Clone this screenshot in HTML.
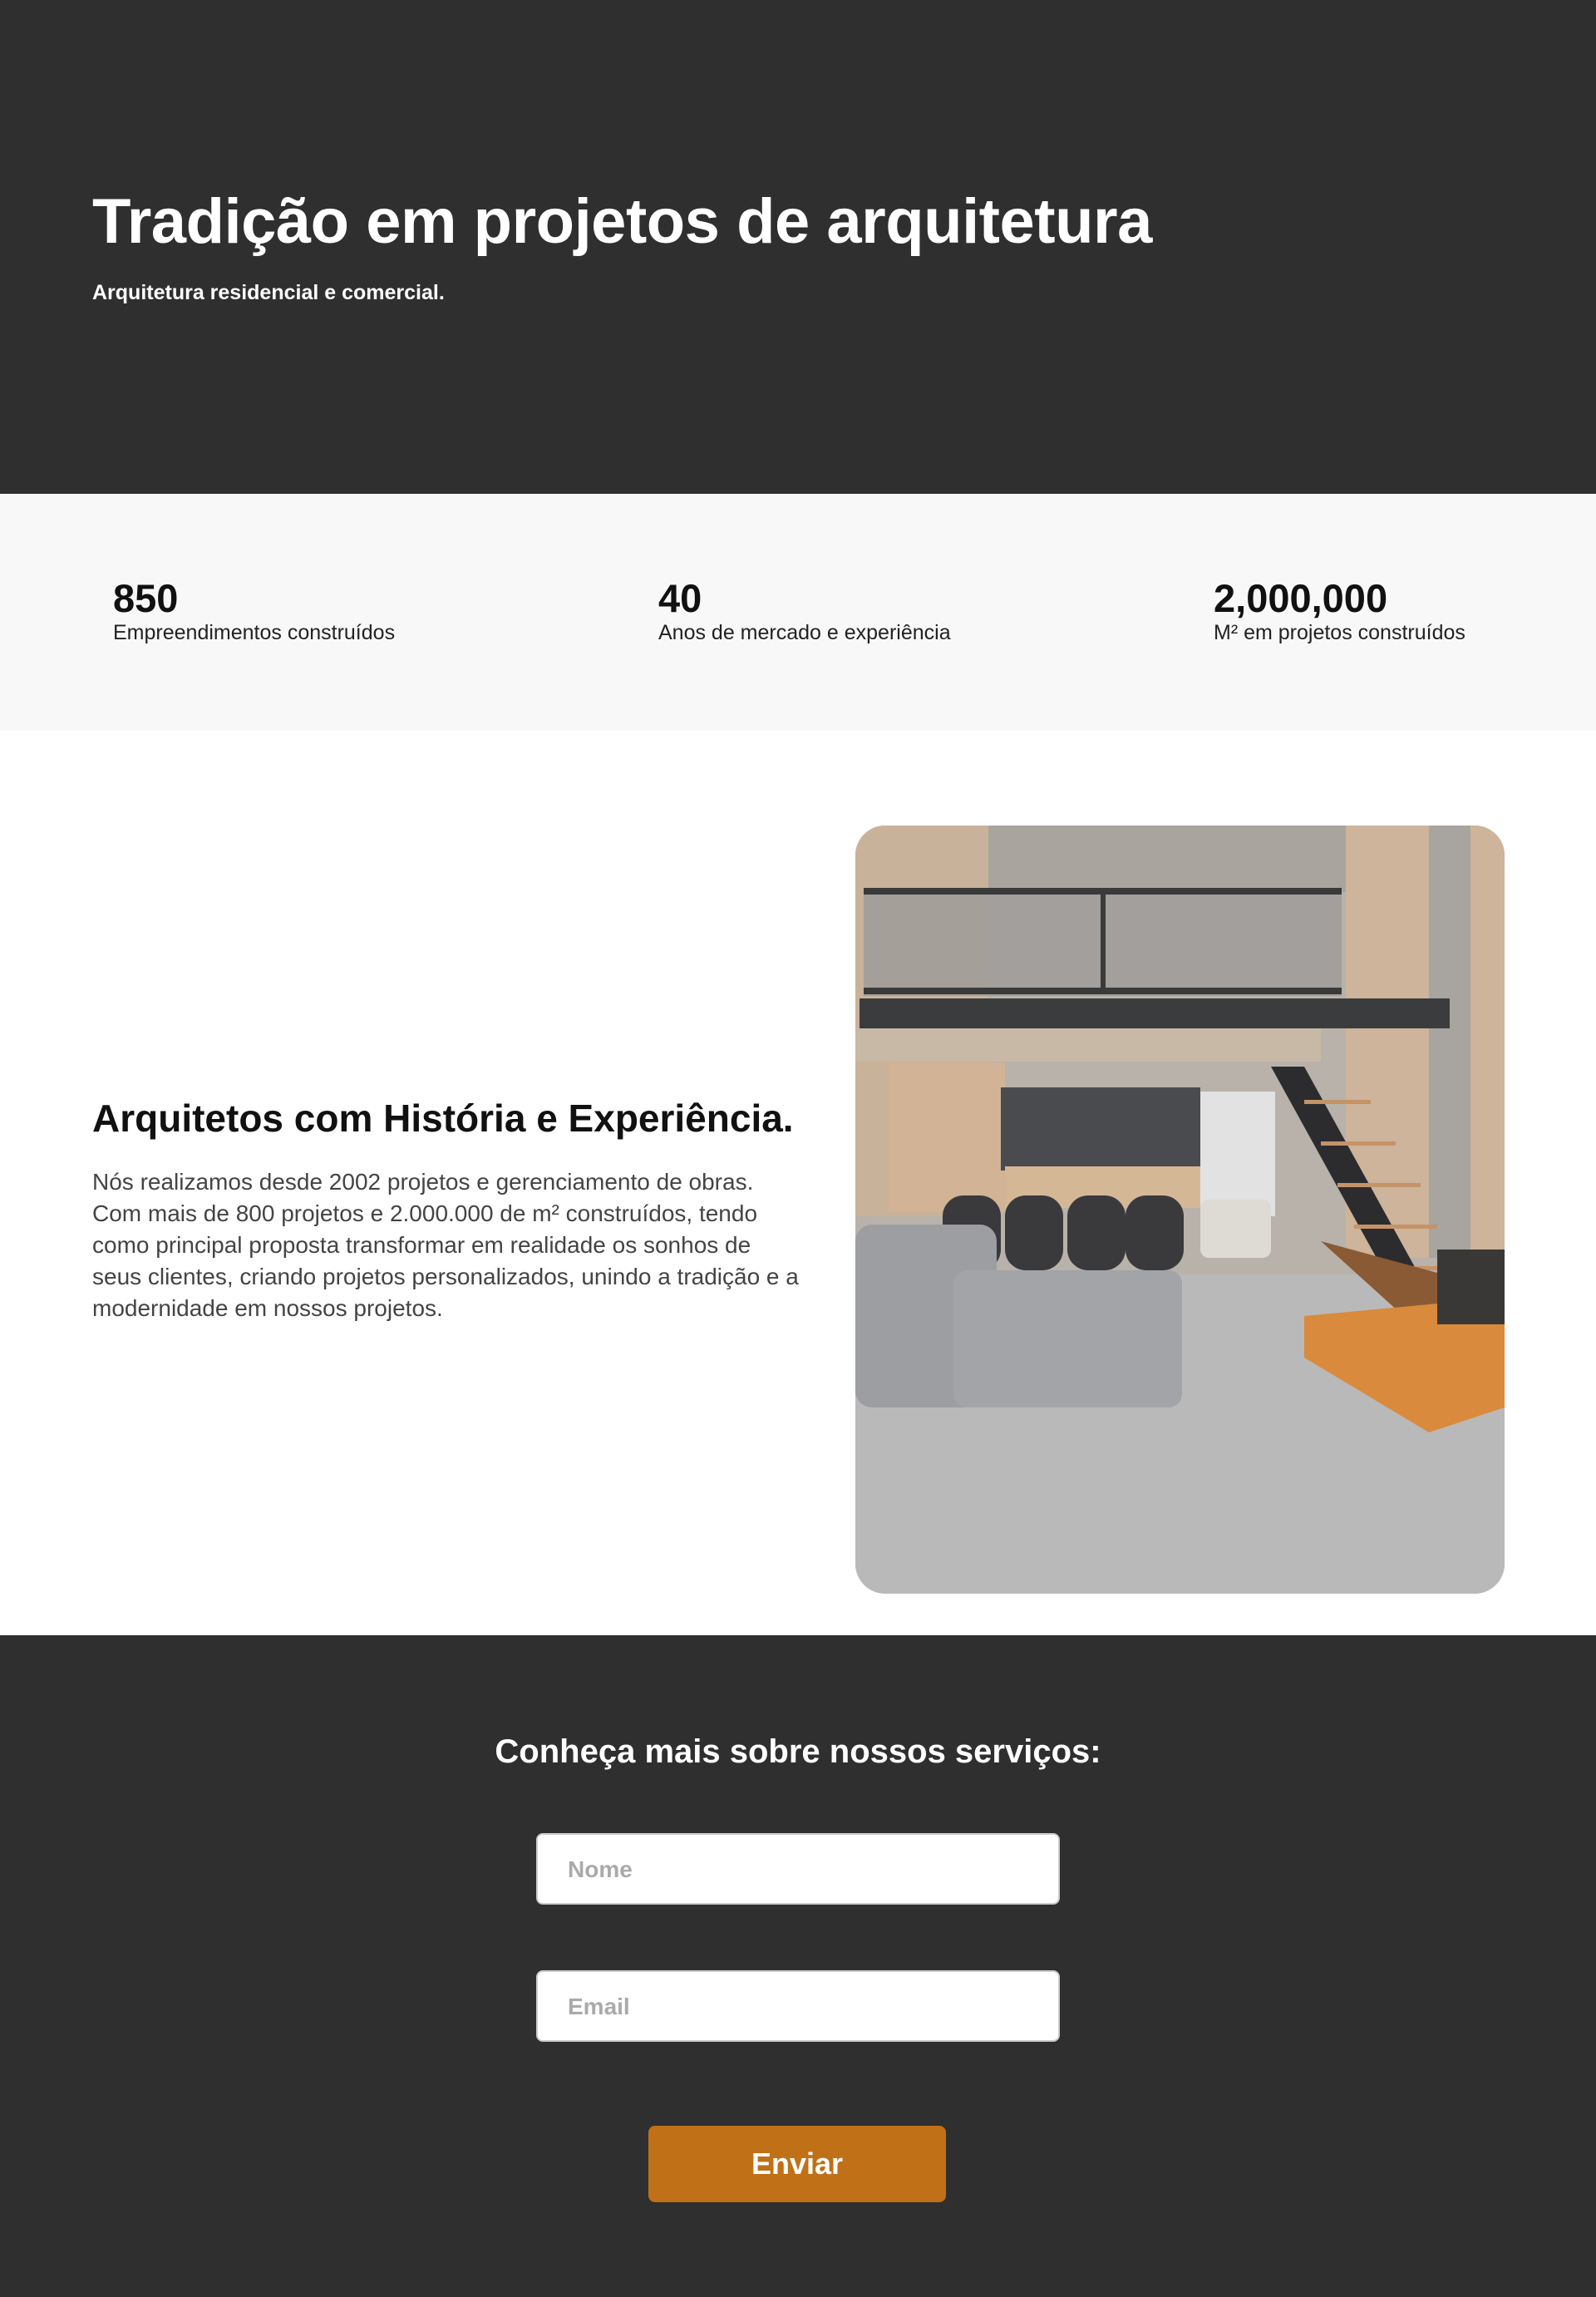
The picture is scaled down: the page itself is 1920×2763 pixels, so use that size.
<!DOCTYPE html>
<html><head><meta charset="utf-8"><style>
*{margin:0;padding:0;box-sizing:border-box}
body{width:1920px;height:2763px;font-family:"Liberation Sans",sans-serif;background:#fff;overflow:hidden;position:relative}
.hero{background:#2f2f2f;height:594px;color:#fff}
.hero h1{position:absolute;left:111px;top:222px;font-size:76px;font-weight:bold;line-height:90px;letter-spacing:-0.5px}
.hero p{position:absolute;left:111px;top:338px;font-size:25px;font-weight:bold}
.stats{background:#f8f8f8;height:285px}
.st{position:absolute;top:694px}
.st b{display:block;font-size:47px;line-height:52px;color:#111}
.st span{display:block;font-size:25px;line-height:30px;color:#222}
.about{height:1088px}
.about h2{position:absolute;left:111px;top:1318px;font-size:46px;font-weight:bold;color:#111}
.about p{position:absolute;left:111px;top:1403px;width:855px;font-size:28px;line-height:38px;color:#444}
.img{position:absolute;left:1029px;top:993px;width:781px;height:924px;border-radius:36px;overflow:hidden}
.foot{background:#2f2f2f;height:796px}
.inp{position:absolute;left:645px;width:630px;height:86px;background:#fff;border-radius:8px;border:2px solid #ccc;font-size:28px;color:#aaa;font-weight:bold;padding:26px 36px}
.btn{position:absolute;left:780px;top:2557px;width:358px;height:92px;background:#c07016;border-radius:8px;color:#fff;font-size:36px;font-weight:bold;text-align:center;line-height:92px}
</style></head><body>
<div class="hero"><h1>Tradição em projetos de arquitetura</h1><p>Arquitetura residencial e comercial.</p></div>
<div class="stats"></div>
<div class="st" style="left:136px"><b>850</b><span>Empreendimentos construídos</span></div>
<div class="st" style="left:792px"><b>40</b><span>Anos de mercado e experiência</span></div>
<div class="st" style="left:1460px"><b>2,000,000</b><span>M² em projetos construídos</span></div>
<div class="about">
<h2>Arquitetos com História e Experiência.</h2>
<p>Nós realizamos desde 2002 projetos e gerenciamento de obras. Com mais de 800 projetos e 2.000.000 de m² construídos, tendo como principal proposta transformar em realidade os sonhos de seus clientes, criando projetos personalizados, unindo a tradição e a modernidade em nossos projetos.</p>
<div class="img"><svg width="781" height="924" viewBox="0 0 781 924">
<rect width="781" height="924" fill="#b8b2aa"/>
<rect width="781" height="80" fill="#a9a49e"/>
<rect x="0" y="0" width="160" height="470" fill="#c9b29a"/>
<rect x="590" y="0" width="191" height="520" fill="#cdb49a"/>
<rect x="690" y="0" width="50" height="520" fill="#a8a49f"/>
<rect x="10" y="75" width="575" height="130" fill="#9c9a98" opacity=".8"/>
<rect x="10" y="75" width="575" height="8" fill="#3a3a3a"/>
<rect x="10" y="195" width="575" height="8" fill="#3a3a3a"/>
<rect x="295" y="80" width="6" height="120" fill="#3a3a3a"/>
<rect x="5" y="208" width="710" height="36" fill="#3b3c3e"/>
<rect x="0" y="244" width="560" height="40" fill="#c8b9a6"/>
<rect x="40" y="285" width="140" height="180" fill="#d2b395"/>
<rect x="175" y="315" width="240" height="100" fill="#4a4b4e"/>
<rect x="180" y="410" width="235" height="50" fill="#d4b896"/>
<rect x="415" y="320" width="90" height="150" fill="#e2e2e2"/>
<polygon points="500,290 540,290 700,580 660,580" fill="#2c2c2e"/>
<g fill="#c49468"><rect x="540" y="330" width="80" height="5"/><rect x="560" y="380" width="90" height="5"/><rect x="580" y="430" width="100" height="5"/><rect x="600" y="480" width="100" height="5"/><rect x="610" y="530" width="100" height="5"/></g>
<rect x="0" y="540" width="781" height="384" fill="#b9b9b9"/>
<polygon points="560,500 781,560 781,700" fill="#8a5a34"/>
<g fill="#3a3a3d"><rect x="105" y="445" width="70" height="90" rx="25"/><rect x="180" y="445" width="70" height="90" rx="25"/><rect x="255" y="445" width="70" height="90" rx="25"/><rect x="325" y="445" width="70" height="90" rx="25"/></g>
<rect x="415" y="450" width="85" height="70" rx="10" fill="#dedad4"/>
<rect x="0" y="480" width="170" height="220" rx="20" fill="#9d9ea2"/>
<rect x="118" y="535" width="275" height="165" rx="16" fill="#a3a4a8"/>
<polygon points="540,590 700,575 781,590 781,700 690,730 540,640" fill="#d98a3c"/>
<rect x="700" y="510" width="81" height="90" fill="#3a3836"/>
</svg></div>
</div>
<div class="foot"></div>
<h3 style="position:absolute;left:0;width:1920px;top:2085px;text-align:center;color:#fff;font-size:40px;font-weight:bold">Conheça mais sobre nossos serviços:</h3>
<div class="inp" style="top:2205px">Nome</div>
<div class="inp" style="top:2370px">Email</div>
<div class="btn">Enviar</div>
</body></html>
